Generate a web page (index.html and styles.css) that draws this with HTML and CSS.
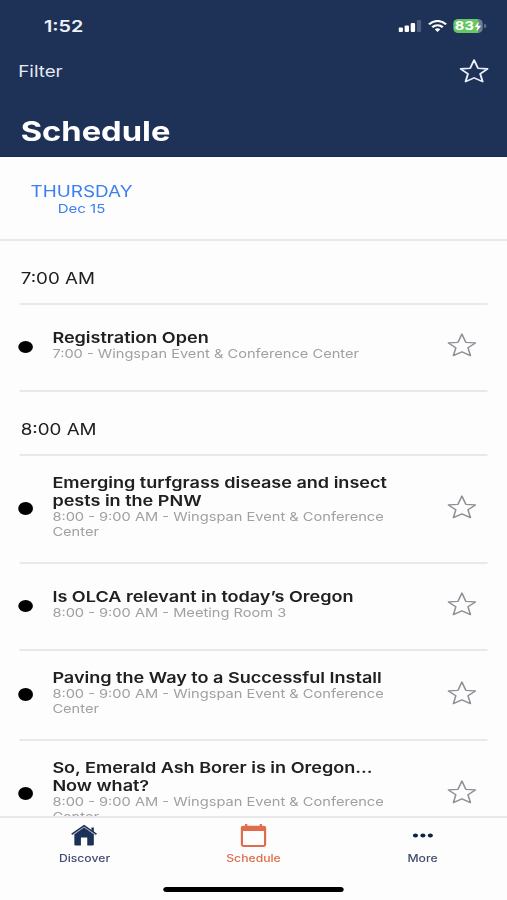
FILE: index.html
```html
<!DOCTYPE html>
<html lang="en">
<head>
<meta charset="utf-8">
<title>Schedule</title>
<link rel="stylesheet" href="styles.css">
</head>
<body>
<svg class="defs" width="0" height="0" aria-hidden="true">
  <symbol id="star" viewBox="0 0 24 24"><path d="M12 1 15.200 9.300 23.100 9.900 17 14.800 19 22.600 12 18.900 5 22.600 7 14.800 .9 9.900 8.800 9.300Z" fill="none" stroke="currentColor" stroke-linejoin="round"/></symbol>
</svg>
<div class="app">
  <header class="header">
    <div class="status">
      <span class="clock">1:52</span>
      <div class="indicators">
        <svg class="signal" width="19" height="12" viewBox="0 0 19 12"><g fill="#fff"><rect x="0" y="7.500" width="3.600" height="4.500" rx="1"/><rect x="5" y="5.500" width="3.600" height="6.500" rx="1"/><rect x="10" y="3" width="3.600" height="9" rx="1"/></g><rect x="15" y="0" width="3.600" height="12" rx="1" fill="#4d5d7f"/></svg>
        <svg class="wifi" width="16" height="12" viewBox="0 0 16 12"><g fill="none" stroke="#fff" stroke-width="2"><path d="M1 4.300C5-.2 11-.2 15 4.300"/><path d="M3.700 7.300C6.200 4.600 9.800 4.600 12.300 7.300"/></g><path d="M5.700 9.300Q8 7.300 10.300 9.300L8 11.900Z" fill="#fff"/></svg>
        <div class="battery"><span>83</span><svg width="6" height="11" viewBox="0 0 6 11"><path d="M4 .5.300 6H2.700L2 10.500 5.800 4.700H3.300Z" fill="#fff"/></svg></div>
        <i class="cap"></i>
      </div>
    </div>
    <div class="toolbar"><span class="filter">Filter</span><svg class="star"><use href="#star"/></svg></div>
    <h1>Schedule</h1>
  </header>
  <nav class="days"><div class="day"><b>THURSDAY</b><span>Dec 15</span></div></nav>
  <main class="list">
    <h2>7:00 AM</h2>
    <article class="row"><i class="dot"></i><div class="text"><h3>Registration Open</h3><p>7:00 - Wingspan Event &amp; Conference Center</p></div><svg class="star"><use href="#star"/></svg></article>
    <h2>8:00 AM</h2>
    <article class="row tall"><i class="dot"></i><div class="text"><h3>Emerging turfgrass disease and insect<br>pests in the PNW</h3><p>8:00 - 9:00 AM - Wingspan Event &amp; Conference<br>Center</p></div><svg class="star"><use href="#star"/></svg></article>
    <article class="row"><i class="dot"></i><div class="text"><h3>Is OLCA relevant in today’s Oregon</h3><p>8:00 - 9:00 AM - Meeting Room 3</p></div><svg class="star"><use href="#star"/></svg></article>
    <article class="row mid"><i class="dot"></i><div class="text"><h3>Paving the Way to a Successful Install</h3><p>8:00 - 9:00 AM - Wingspan Event &amp; Conference<br>Center</p></div><svg class="star"><use href="#star"/></svg></article>
    <article class="row tall"><i class="dot"></i><div class="text"><h3>So, Emerald Ash Borer is in Oregon...<br>Now what?</h3><p>8:00 - 9:00 AM - Wingspan Event &amp; Conference<br>Center</p></div><svg class="star"><use href="#star"/></svg></article>
  </main>
  <footer class="tabs">
    <div class="tabrow">
      <div class="tab"><svg width="22" height="22" viewBox="0 0 22 22"><path d="M17 3H19V8L17 6Z" fill="#1c3157"/><path d="M3 9.800 11 2.500 19 9.800V20Q19 21 18 21H13.600V13H8.400V21H4Q3 21 3 20Z" fill="#1c3157"/><path d="M1.200 10.700 11 2.700 20.800 10.700" fill="none" stroke="#aab3c4" stroke-width=".8"/><path d="M.8 9.800 11 1.200 21.200 9.800" fill="none" stroke="#1c3157" stroke-width="1.400"/></svg><span>Discover</span></div>
      <div class="tab active"><svg width="22" height="23" viewBox="0 0 22 23"><path d="M5 0V3M17 0V3" stroke="currentColor" stroke-width="1.800"/><rect x="1.500" y="2.700" width="19" height="19.300" rx="1.500" fill="none" stroke="currentColor" stroke-width="1.800"/><path d="M2.500 2H19.500Q20.500 2 20.500 3V7H1.500V3Q1.500 2 2.500 2Z" fill="currentColor"/></svg><span>Schedule</span></div>
      <div class="tab"><svg width="22" height="22" viewBox="0 0 22 22"><g fill="#0f2347"><circle cx="4.900" cy="11" r="2.100"/><circle cx="11" cy="11" r="2.100"/><circle cx="17.100" cy="11" r="2.100"/></g></svg><span>More</span></div>
    </div>
    <div class="home"></div>
  </footer>
</div>
</body>
</html>
```
FILE: styles.css
```css
* { box-sizing: border-box; margin: 0; padding: 0; }
html, body { width: 507px; height: 900px; overflow: hidden; background: #fdfdfd; }
.defs { display: block; }
.app {
  width: 416px; height: 900px;
  transform: scaleX(1.21875); transform-origin: 0 0;
  display: flex; flex-direction: column;
  font-family: Inter, "Liberation Sans", sans-serif;
  color: #202020; white-space: nowrap;
}
.star { width: 24px; height: 24px; flex: none; color: #8d9096; stroke-width: 1.3; }
.header { height: 157px; flex: none; background: #1e3157; color: #fff; border-bottom: 1px solid #1b2850; }
.status { height: 52px; padding: 0 17.5px 0 36px; display: flex; align-items: center; justify-content: space-between; }
.clock { font-size: 16.2px; font-weight: 600; color: #eef2fa; }
.indicators { display: flex; align-items: center; }
.signal { margin-right: 1px; }
.wifi { margin: 0 5px 0 4px; }
.battery { width: 24px; height: 14px; border-radius: 4px; background: linear-gradient(90deg, #67c765 83%, #6d7f91 83%); display: flex; align-items: center; justify-content: center; }
.battery span { font-size: 12px; font-weight: 700; line-height: 14px; }
.cap { width: 1.5px; height: 4px; margin-left: 1px; border-radius: 1px; background: #5d6c89; }
.toolbar { height: 39px; padding: 0 15px; display: flex; align-items: center; justify-content: space-between; }
.filter { font-size: 15.4px; color: #e5eaf3; }
.toolbar .star { color: #e9eefa; stroke-width: 1.6; margin-bottom: 1px; }
h1 { padding-left: 17px; font-size: 26.8px; font-weight: 700; line-height: 34px; margin-top: 23px; }
.days { height: 84px; flex: none; padding: 26px 0 0 25px; display: flex; border-bottom: 2px solid #e9e9e9; }
.day { display: flex; flex-direction: column; align-items: center; height: 34px; color: #3b80ee; }
.day b { font-size: 15.5px; font-weight: 400; line-height: 18px; }
.day span { font-size: 12.3px; line-height: 16px; }
.list { height: 575px; flex: none; overflow: hidden; padding: 0 16px; }
h2 { height: 64px; padding: 12px 0 0 1px; border-bottom: 2px solid #e9e9e9; font-size: 15.4px; font-weight: 400; line-height: 52px; }
.row { height: 87px; display: flex; align-items: center; padding: 0 9px 5px 0; border-bottom: 2px solid #e9e9e9; }
.row.tall { height: 108px; }
.row.mid { height: 90px; }
.dot { width: 12.4px; height: 12.4px; margin: 4px 16.1px 0 -1.500px; border-radius: 50%; background: #000; flex: none; }
.text { flex: 1; }
h3 { font-size: 14.8px; font-weight: 600; line-height: 18px; }
p { font-size: 12px; line-height: 14.4px; color: #a0a0a0; }
.tabs { flex: 1; border-top: 2px solid #e9e9e9; display: flex; flex-direction: column; align-items: center; }
.tabrow { width: 100%; display: flex; padding: 6px 0 0; }
.tab { flex: 1; display: flex; flex-direction: column; align-items: center; color: #3f4a70; }
.tab svg { height: 23px; }
.tab span { font-size: 10px; line-height: 14px; margin-top: 4px; font-weight: 500; }
.tab.active { color: #e06c49; }
.home { width: 148px; height: 5px; margin-top: 22px; border-radius: 3px; background: #000; }
```
